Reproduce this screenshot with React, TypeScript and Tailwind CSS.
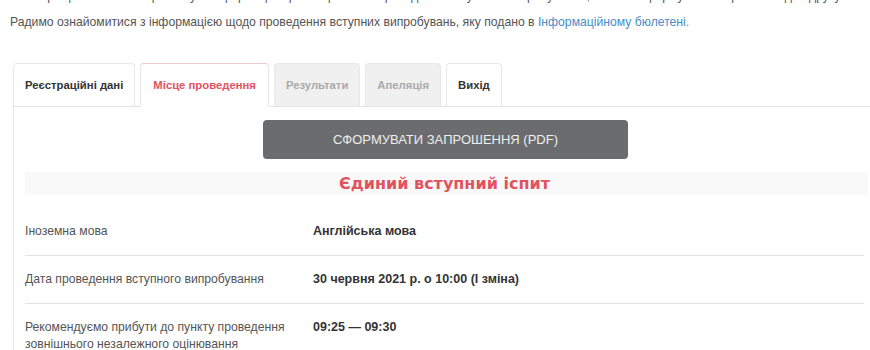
const rows = [
  { label: ['Іноземна мова'], value: 'Англійська мова' },
  { label: ['Дата проведення вступного випробування'], value: '30 червня 2021 р. о 10:00 (І зміна)' },
  {
    label: ['Рекомендуємо прибути до пункту проведення', 'зовнішнього незалежного оцінювання'],
    value: '09:25 — 09:30',
  },
]

const tabs = [
  { name: 'Реєстраційні дані', kind: 'normal' },
  { name: 'Місце проведення', kind: 'active' },
  { name: 'Результати', kind: 'disabled' },
  { name: 'Апеляція', kind: 'disabled' },
  { name: 'Вихід', kind: 'normal' },
]

export default function App() {
  return (
    <div className="w-[870px] h-[350px] overflow-hidden bg-white font-['Liberation_Sans',Arial,sans-serif] text-[12.2px] text-[#555]">
      <p className="mt-[-12px] px-[10px] leading-[16px] text-[#555] whitespace-nowrap">
        На сторінці ви можете переглянути інформацію про місце та час проведення вступного випробування, а також сформувати запрошення для друку.
      </p>
      <p className="mt-[10px] px-[10px] leading-[16px] whitespace-nowrap">
        Радимо ознайомитися з інформацією щодо проведення вступних випробувань, яку подано в{' '}
        <a className="text-[#4a8cc8]">Інформаційному бюлетені.</a>
      </p>

      <div className="mt-[34px] ml-[13px]">
        <div className="flex items-end gap-[5px] h-[43px] border-b border-[#e3e3e3]">
          {tabs.map((t) => (
            <div
              key={t.name}
              className={
                'h-[43px] flex items-center px-[11px] rounded-t-[4px] border font-bold text-[11.3px] ' +
                (t.kind === 'active'
                  ? 'bg-white border-[#e8e8e8] border-t-[#f0c8cc] border-b-white text-[#e2525f] mb-[-1px] h-[44px] px-[12px]'
                  : t.kind === 'disabled'
                    ? 'bg-[#f0f0f0] border-[#e8e8e8] text-[#aaa] border-b-0'
                    : 'bg-white border-[#e8e8e8] text-[#333] border-b-0')
              }
            >
              {t.name}
            </div>
          ))}
        </div>

        <div className="border-l border-[#e8e8e8] pl-[11px] pr-[2px] pt-[13px]">
          <div className="flex justify-center">
            <button className="w-[365px] h-[39px] ml-[-2px] rounded-[4px] bg-[#6b6c6e] text-[#eee] text-[13px] uppercase">
              Сформувати запрошення (PDF)
            </button>
          </div>

          <div className="mt-[13px] h-[23px] bg-[#f9f9f9] flex items-center justify-center">
            <span className="font-['DejaVu_Sans',Verdana,sans-serif] font-bold text-[16px] text-[#e2525f] ml-[-4px]">
              Єдиний вступний іспит
            </span>
          </div>

          <div className="mt-[13px] pr-[4px]">
            {rows.map((r, i) => (
              <div
                key={i}
                className={'flex py-[15px] ' + (i < rows.length - 1 ? 'border-b border-[#e2e2e2]' : '')}
              >
                <div className="w-[288px] leading-[17px]">
                  {r.label.map((l) => (
                    <div key={l}>{l}</div>
                  ))}
                </div>
                <div className="font-bold text-[12.5px] text-[#333] leading-[17px]">{r.value}</div>
              </div>
            ))}
          </div>
        </div>
      </div>
    </div>
  )
}
